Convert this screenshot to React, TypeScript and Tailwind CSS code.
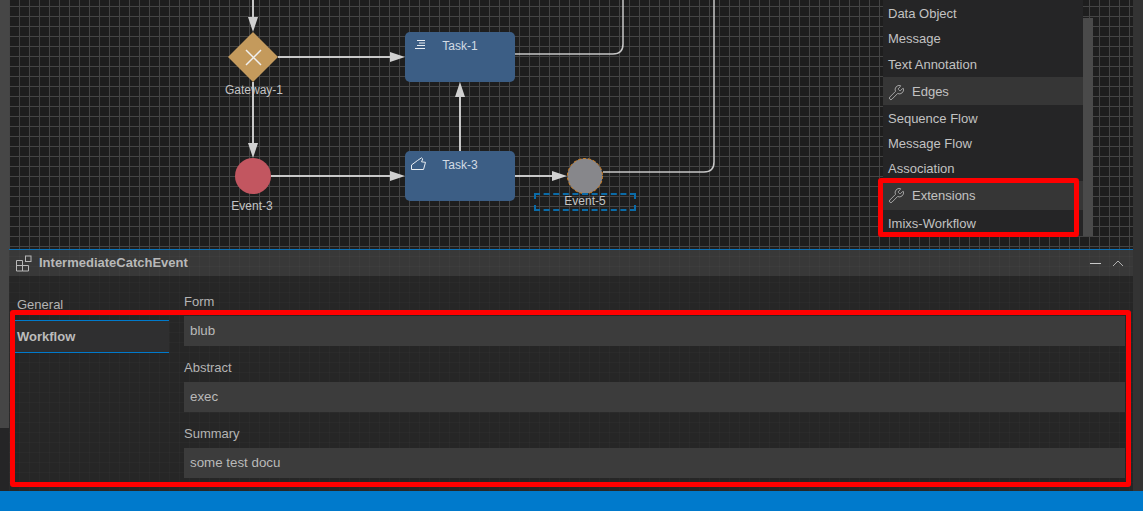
import { Wrench } from "lucide-react";

const grid =
  "bg-[linear-gradient(#444444_1px,transparent_1px),linear-gradient(90deg,#444444_1px,transparent_1px)] bg-[size:10px_10px] bg-[position:0px_6px]";
const faintGrid =
  "bg-[linear-gradient(rgba(255,255,255,0.018)_1px,transparent_1px),linear-gradient(90deg,rgba(255,255,255,0.018)_1px,transparent_1px)] bg-[size:10px_10px] bg-[position:0px_6px]";

function Edges() {
  return (
    <svg width="1124" height="248" viewBox="9 0 1124 248" className="absolute left-0 top-0" fill="none">
      <g stroke="#c8c8c8" strokeWidth="2">
        <path d="M253 0V20" />
        <path d="M278 57H392" />
        <path d="M253 82V145" />
        <path d="M271 176H392" />
        <path d="M460 151V95" />
        <path d="M515 176H554" />
      </g>
      <g stroke="#c8c8c8" strokeWidth="1.5">
        <path d="M515 54H613Q623 54 623 44V0" />
        <path d="M603 172H704Q714 172 714 162V0" />
      </g>
      <g fill="#d0d0d0">
        <path d="M253 32L248 17H258Z" />
        <path d="M405 57L390 52V62Z" />
        <path d="M253 158L248 143H258Z" />
        <path d="M405 176L390 171V181Z" />
        <path d="M460 82L455 97H465Z" />
        <path d="M567 176L552 171V181Z" />
      </g>
      <path d="M253 32L278 57L253 82L228 57Z" fill="#c49a5c" />
      <path d="M246 50L261 65M261 50L246 65" stroke="#f0f0f0" strokeWidth="1.5" />
      <circle cx="253" cy="176" r="18" fill="#c25660" />
      <circle cx="585" cy="176" r="17.5" fill="#87878b" stroke="#d9831f" strokeWidth="1" strokeDasharray="3 2" />
    </svg>
  );
}

function Task({ top, label, icon }: { top: string; label: string; icon: React.ReactNode }) {
  return (
    <div className={`absolute left-[396px] ${top} w-[110px] h-[50px] rounded-[5px] bg-[#3c5e85] text-[#d3dbe4]`}>
      {icon}
      <div className="absolute inset-x-0 top-[5px] text-center text-[12px] leading-[18px]">{label}</div>
    </div>
  );
}

function Label({ className, children }: { className: string; children: React.ReactNode }) {
  return <div className={`absolute text-center text-[12px] leading-[16px] text-[#c4c4c4] ${className}`}>{children}</div>;
}

function PaletteRow({ className, label }: { className: string; label: string }) {
  return <div className={`pl-[5px] leading-[19px] ${className}`}>{label}</div>;
}

function PaletteHeader({ className, label }: { className: string; label: string }) {
  return (
    <div className={`pl-[5px] flex items-center gap-[7px] bg-[#363636] ${className}`}>
      <Wrench size={17} strokeWidth={1.1} />
      <span>{label}</span>
    </div>
  );
}

function Palette() {
  return (
    <div className="absolute left-[874px] top-0 h-[236px] w-[210px] flex text-[13px] text-[#c2c2c2]">
      <div className="w-[200px] pt-px bg-[#252526] overflow-hidden">
        <PaletteRow className="h-[25px] pt-[3px]" label="Data Object" />
        <PaletteRow className="h-[25px] pt-[3px]" label="Message" />
        <PaletteRow className="h-[26px] pt-[4px]" label="Text Annotation" />
        <PaletteHeader className="h-[28px] pt-[2px]" label="Edges" />
        <PaletteRow className="h-[25px] pt-[4px]" label="Sequence Flow" />
        <PaletteRow className="h-[25px] pt-[4px]" label="Message Flow" />
        <PaletteRow className="h-[26px] pt-[4px]" label="Association" />
        <PaletteHeader className="h-[29px]" label="Extensions" />
        <PaletteRow className="h-[26px] pt-[4px]" label="Imixs-Workflow" />
      </div>
      <div className="w-[10px] mt-[18px] bg-[#4a4a4a]" />
    </div>
  );
}

function Field({ label, value }: { label: string; value: string }) {
  return (
    <div className="h-[66px]">
      <div className="h-[22px] text-[13px] leading-[16px] text-[#b4b4b4]">{label}</div>
      <div className="h-[30px] pl-[6px] flex items-center bg-[#3c3c3c] text-[13.33px] text-[#b9b9b9]">{value}</div>
    </div>
  );
}

export default function App() {
  return (
    <div className="relative w-[1143px] h-[511px] overflow-hidden flex flex-col bg-[#333333] font-['Liberation_Sans',Arial,sans-serif]">
      <div className="flex-1 flex min-h-0">
        <div className="w-[9px] flex flex-col bg-[#252526]">
          <div className="h-[428px] bg-[#464646]" />
        </div>

        <div className="w-[1124px] flex flex-col">
          <div className={`relative h-[249px] shrink-0 bg-[#1e1e1e] ${grid}`}>
            <Edges />
            <Task
              top="top-[32px]"
              label="Task-1"
              icon={
                <svg width="10" height="11" viewBox="0 0 10 11" className="absolute left-[10px] top-[7px]" stroke="#e8edf2" strokeWidth="1">
                  <path d="M2 1.5H10M4 4H10M2 6.5H10M0 9.5H10" />
                </svg>
              }
            />
            <Task
              top="top-[151px]"
              label="Task-3"
              icon={
                <svg width="16" height="14" viewBox="0 0 16 14" fill="none" className="absolute left-[5.5px] top-[6px]" stroke="#e8edf2" strokeWidth="1">
                  <path d="M.5 8L6.5 3.5L10.5 .8L11.8 2L10.5 4.8L14.5 5.3L12.5 12.5H.5Z" strokeLinejoin="round" />
                </svg>
              }
            />
            <Label className="left-[206px] top-[82px] w-[78px]">Gateway-1</Label>
            <Label className="left-[203px] top-[198px] w-[80px]">Event-3</Label>
            <div className="absolute left-[525px] top-[193px] w-[102px] h-[18px] border-2 border-dashed border-[#0a6ba8] text-center text-[12px] leading-[12px] text-[#c4c4c4]">
              Event-5
            </div>
            <Palette />
          </div>

          <div className="h-px shrink-0 bg-[#0a70b5]" />

          <div className={`h-[26px] shrink-0 flex items-center bg-[#383838] ${faintGrid}`}>
            <svg width="17" height="17" viewBox="0 0 17 17" fill="none" stroke="#b8b8b8" strokeWidth="1" className="ml-[6px]">
              <path d="M1.5 5.5H7.5V16H1.5ZM1.5 10.5H13.5V16H7.5" />
              <rect x="10.5" y="1" width="5.5" height="5.5" />
            </svg>
            <span className="ml-[7px] text-[13px] font-bold text-[#b8b8b8]">IntermediateCatchEvent</span>
            <div className="ml-auto mr-[9px] flex items-center gap-[11px]">
              <div className="w-[11px] h-px bg-[#c8c8c8]" />
              <svg width="12" height="7" viewBox="0 0 12 7" fill="none" stroke="#b0b0b0" strokeWidth="1">
                <path d="M1 6L6 1L11 6" />
              </svg>
            </div>
          </div>

          <div className={`flex-1 min-h-0 flex bg-[#262626] ${faintGrid}`}>
            <div className="w-[160px] pt-[18px] pl-[6px] shrink-0 text-[13px]">
              <div className="h-[21px] mb-[5px] pl-[2px] flex items-center text-[#b4b4b4]">General</div>
              <div className="h-px bg-[#007acc]" />
              <div className="h-[31px] pl-[2px] flex items-center font-bold text-[#bcbcbc] bg-[#2f2f30]">Workflow</div>
              <div className="h-px bg-[#007acc]" />
            </div>
            <div className="flex-1 pl-[15px] pr-[8px] pt-[18px]">
              <Field label="Form" value="blub" />
              <Field label="Abstract" value="exec" />
              <Field label="Summary" value="some test docu" />
            </div>
          </div>
        </div>

        <div className="w-[10px]" />
      </div>

      <div className="h-[20px] bg-[#007acc]" />

      <div className="absolute left-[878px] top-[178px] w-[201px] h-[59px] border-[5px] border-[#ff0000] rounded-[3px]" />
      <div className="absolute left-[10px] top-[310px] w-[1121px] h-[177px] border-[5px] border-[#ff0000] rounded-[3px]" />
    </div>
  );
}
